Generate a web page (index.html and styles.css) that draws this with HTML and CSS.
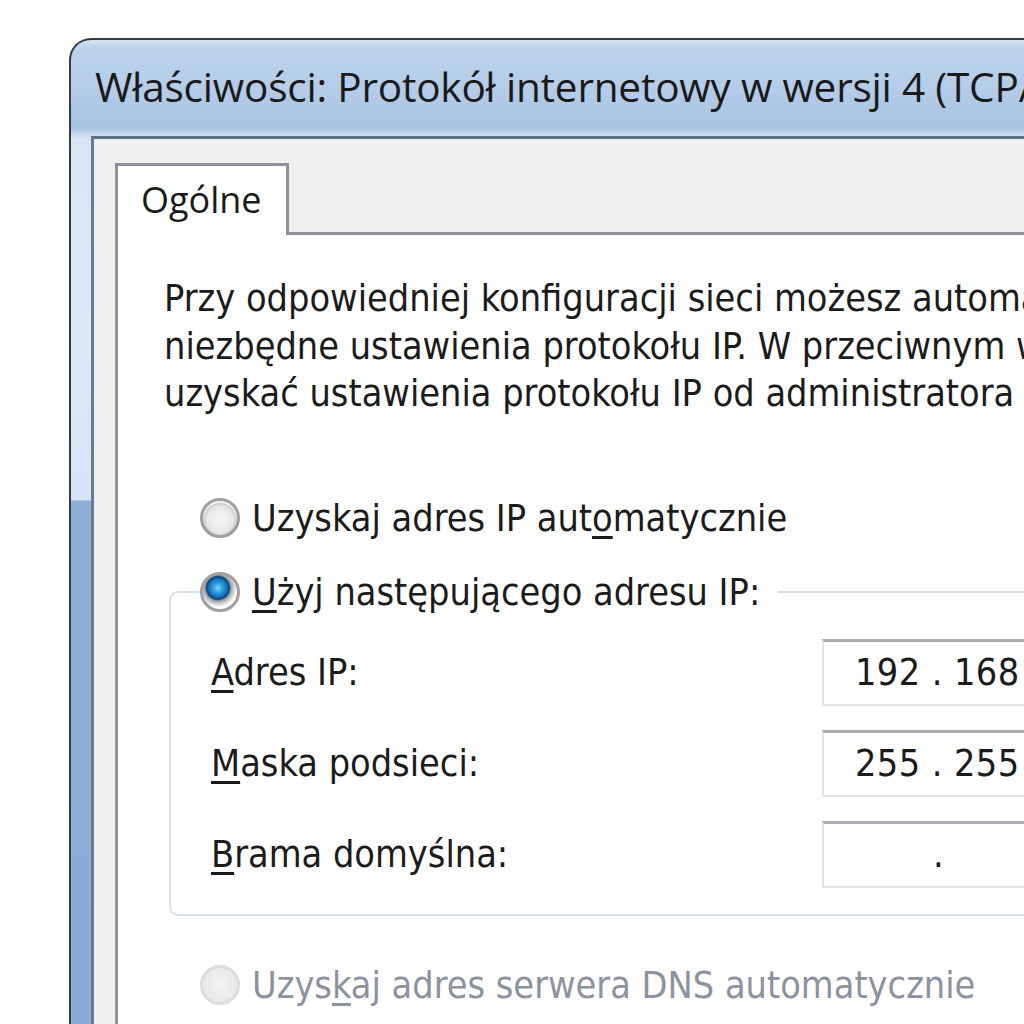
FILE: index.html
```html
<!DOCTYPE html>
<html lang="pl">
<head>
<meta charset="utf-8">
<title>Właściwości: Protokół internetowy w wersji 4 (TCP/IPv4)</title>
<link rel="stylesheet" href="styles.css">
</head>
<body>
<div class="window">
  <div class="titlebar">Właściwości: Protokół internetowy w wersji 4 (TCP/IPv4)</div>
  <div class="client">
    <div class="tabs">
      <div class="tab">Ogólne</div>
      <div class="tab-rest"></div>
    </div>
    <div class="panel">
      <p class="intro">Przy odpowiedniej konfiguracji sieci możesz automatycznie uzyskać<br>niezbędne ustawienia protokołu IP. W przeciwnym wypadku musisz<br>uzyskać ustawienia protokołu IP od administratora sieci.</p>
      <div class="option first">
        <span class="radio"></span>
        <span class="label">Uzyskaj adres IP aut<u>o</u>matycznie</span>
      </div>
      <fieldset class="group">
        <legend class="option legend">
          <span class="radio checked"></span>
          <span class="label"><u>U</u>żyj następującego adresu IP:</span>
        </legend>
        <div class="field">
          <span class="flabel"><u>A</u>dres IP:</span>
          <span class="ipbox">192 . 168 .&nbsp;&nbsp;&nbsp;1 .&nbsp;&nbsp;10</span>
        </div>
        <div class="field">
          <span class="flabel"><u>M</u>aska podsieci:</span>
          <span class="ipbox">255 . 255 . 255 .&nbsp;&nbsp;&nbsp;0</span>
        </div>
        <div class="field">
          <span class="flabel"><u>B</u>rama domyślna:</span>
          <span class="ipbox empty"><span class="dot">.</span><span class="dot">.</span><span class="dot">.</span></span>
        </div>
      </fieldset>
      <div class="option disabled">
        <span class="radio"></span>
        <span class="label">Uzys<u>k</u>aj adres serwera DNS automatycznie</span>
      </div>
    </div>
  </div>
</div>
</body>
</html>
```
FILE: styles.css
```css
html, body {
  margin: 0;
  padding: 0;
  background: #ffffff;
  overflow: hidden;
  width: 1024px;
  height: 1024px;
}

.window {
  margin: 38px 0 0 69px;
  width: 1200px;
  height: 1100px;
  box-sizing: border-box;
  border-top: 2px solid #353c46;
  border-left: 2px solid #353c46;
  border-top-left-radius: 22px;
  padding-left: 20px;
  background: linear-gradient(to bottom,
    #d3e2f2 0px, #bdd3eb 8px, #b4cce8 50px, #a8c2e3 88px, #c9dbef 94px,
    #d8e6f4 100px, #dce9f6 300px, #d6e4f3 460px,
    #8eaed7 461px, #8aabd6 1100px);
}

.titlebar {
  height: 96px;
  box-sizing: border-box;
  padding: 19px 0 0 4px;
  font-family: "Open Sans", "Noto Sans", sans-serif;
  font-size: 40.5px;
  color: #1a1a1a;
  white-space: nowrap;
  letter-spacing: -0.2px;
}

.client {
  border-top: 3px solid #5f6f84;
  border-left: 3px solid #6a7b90;
  background: #f0f0f0;
  padding: 24px 0 0 21px;
  height: 1000px;
  font-family: "DejaVu Sans Condensed", "DejaVu Sans", sans-serif;
  font-size: 37.5px;
  color: #1b1b1b;
}

.tabs {
  display: flex;
  align-items: flex-end;
}

.tab {
  width: 168px;
  height: 69px;
  box-sizing: content-box;
  border: 3px solid #8e9199;
  border-bottom: none;
  background: #ffffff;
  font-family: "Open Sans", "Noto Sans", sans-serif;
  font-size: 36px;
  text-indent: 23px;
  line-height: 68px;
  color: #1a1a1a;
}

.tab-rest {
  flex: 1;
  border-bottom: 3px solid #8e9199;
}

.panel {
  background: #ffffff;
  border-left: 3px solid #8e9199;
  padding: 40px 0 0 46px;
  height: 900px;
}

.intro {
  margin: 0;
  line-height: 47.5px;
  white-space: nowrap;
}

.option {
  display: flex;
  align-items: center;
  gap: 12px;
  white-space: nowrap;
}

.panel > .option {
  margin-left: 36px;
}

.panel > .option.first {
  margin-top: 78px;
}

.radio {
  width: 40px;
  height: 40px;
  border-radius: 50%;
  box-sizing: border-box;
  border: 3px solid #a0a0a0;
  background:
    radial-gradient(circle at 50% 55%, #f6f6f6 0, #e8e8e8 50%, #d0d0d0 64%, #fbfbfb 70%, #ffffff 100%);
  flex: none;
}

.radio.checked {
  background:
    radial-gradient(circle at 44% 38%, #8adaff 0, #35a8e6 14%, #1678c0 30%, #0d4574 40%, #9aa3ab 46%, #d9d9d9 58%, #ffffff 68%, #ffffff 100%);
}

.disabled .radio {
  border-color: #dcdcdc;
  background: radial-gradient(circle at 50% 50%, #f3f3f3 0, #e9e9e9 70%, #e4e4e4 100%);
}

.disabled .label {
  color: #8d92a0;
}

u {
  text-decoration-thickness: 3px;
  text-underline-offset: 5px;
}

.group {
  margin: 30px 0 0 5px;
  width: 1100px;
  box-sizing: border-box;
  border: 2px solid #d7e0e8;
  border-radius: 9px;
  padding: 0 0 26px 0;
  min-width: 0;
}

.legend {
  margin-left: 28px;
  padding: 0 18px 0 1px;
}

.field {
  display: flex;
  align-items: center;
  margin: 0 0 24px 40px;
}

.field:first-of-type {
  margin-top: 25px;
}

.field:last-child {
  margin-bottom: 0;
}

.flabel {
  width: 611px;
  flex: none;
}

.ipbox {
  display: block;
  width: 420px;
  height: 67px;
  box-sizing: border-box;
  border: 2px solid #e2e3e8;
  border-top: 3px solid #abadb3;
  background: #ffffff;
  padding-left: 31px;
  line-height: 61px;
  white-space: nowrap;
  letter-spacing: 0.4px;
}

.ipbox.empty {
  display: flex;
  padding-left: 0;
}

.dot {
  width: 120px;
  text-align: right;
  flex: none;
}

.panel > .option.disabled {
  margin-top: 47px;
}
```
